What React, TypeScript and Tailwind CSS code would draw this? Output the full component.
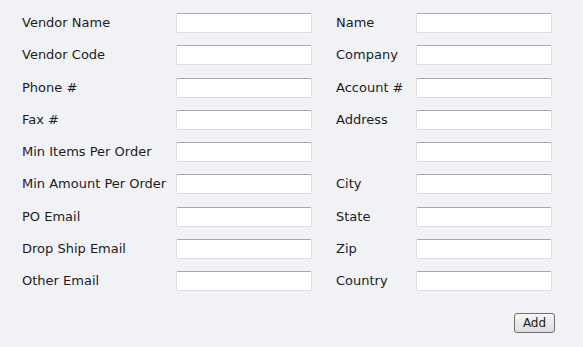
import React from "react";

const left = ["Vendor Name", "Vendor Code", "Phone #", "Fax #", "Min Items Per Order", "Min Amount Per Order", "PO Email", "Drop Ship Email", "Other Email"];
const right = ["Name", "Company", "Account #", "Address", "", "City", "State", "Zip", "Country"];

function Field() {
  return (
    <input
      type="text"
      className="h-[20px] w-[136px] rounded-[2px] border border-[#dcdde2] border-t-[#a9a9ad] bg-white outline-none"
    />
  );
}

export default function App() {
  return (
    <div
      className="w-[583px] h-[347px] bg-[#f1f2f6] text-[#1c1c1c] text-[13px]"
      style={{ fontFamily: '"DejaVu Sans", Verdana, sans-serif' }}
    >
      <div className="pl-[22px] pt-[13px] flex flex-col gap-y-[12.25px]">
        {left.map((l, i) => (
          <div key={i} className="flex items-center h-[20px]">
            <div className="w-[154px] leading-[20px] whitespace-nowrap">{l}</div>
            <Field />
            <div className="w-[80px] ml-[24px] leading-[20px] whitespace-nowrap">{right[i]}</div>
            <Field />
          </div>
        ))}
      </div>
      <div className="flex justify-end pr-[28px] pt-[22px]">
        <button className="h-[20px] w-[41px] rounded-[3px] border border-[#707070] bg-gradient-to-b from-[#f6f6f6] to-[#dedede] text-[12px] text-[#1c1c1c] leading-[18px]">
          Add
        </button>
      </div>
    </div>
  );
}
